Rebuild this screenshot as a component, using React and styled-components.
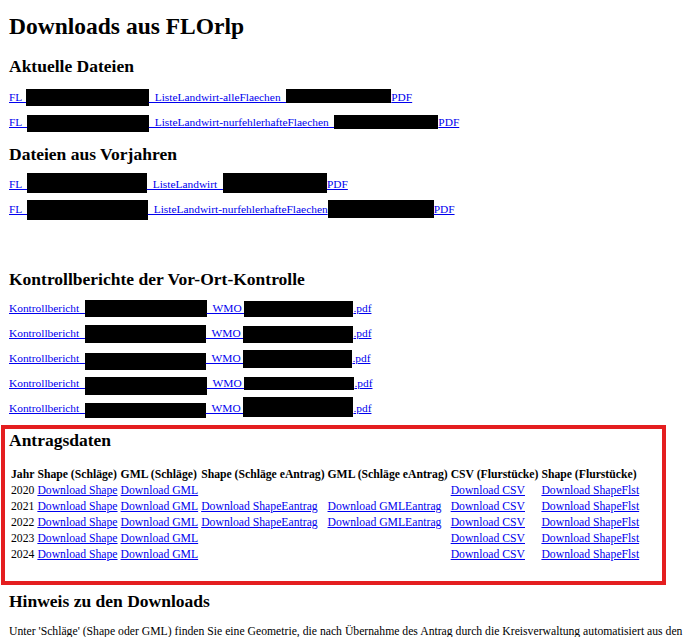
import React from 'react';
import styled, {createGlobalStyle} from "styled-components";

const GlobalStyle=createGlobalStyle`
  html{
    overflow:hidden;
  }
  body{
    margin:0;
    background:#fff;
  }
`;

const current=[
  {pre:"FL_",boxes:[{w:123,h:17,va:-5,ml:-2},{w:105,h:14,va:-2}],parts:["_ListeLandwirt-alleFlaechen_","PDF"]},
  {pre:"FL_",boxes:[{w:122,h:17,va:-6,ml:-1},{w:104,h:14,va:-3}],parts:["_ListeLandwirt-nurfehlerhafteFlaechen_","PDF"]},
];

const previous=[
  {pre:"FL_",boxes:[{w:120,h:20,va:-5,ml:-1},{w:104,h:20,va:-5}],parts:["_ListeLandwirt_","PDF"]},
  {pre:"FL_",boxes:[{w:121,h:20,va:-7,ml:-1},{w:106,h:18,va:-5}],parts:["_ListeLandwirt-nurfehlerhafteFlaechen","PDF"]},
];

const reports=[
  [{w:122,h:17,va:-5},{w:109,h:16,va:-5,ml:-3}],
  [{w:121,h:18,va:-6},{w:110,h:17,va:-6,ml:-3}],
  [{w:121,h:17,va:-8},{w:109,h:18,va:-6,ml:-3}],
  [{w:122,h:18,va:-8},{w:110,h:13,va:-3,ml:-3}],
  [{w:121,h:15,va:-6},{w:110,h:20,va:-5,ml:-3}],
].map(boxes=>({pre:"Kontrollbericht_",boxes,parts:["_WMO_",".pdf"]}));

const columns=["Jahr","Shape (Schläge)","GML (Schläge)","Shape (Schläge eAntrag)","GML (Schläge eAntrag)","CSV (Flurstücke)","Shape (Flurstücke)"];

const years=[
  {year:2020,eantrag:false},
  {year:2021,eantrag:true},
  {year:2022,eantrag:true},
  {year:2023,eantrag:false},
  {year:2024,eantrag:false},
];

export default function App() {

  const Box=({b})=><Redact $w={b.w} $h={b.h} $va={b.va} $ml={b.ml||0}/>

  const FileLink=({file})=>(
    <Row>
      <Anchor href="#">
        {file.pre}
        <Box b={file.boxes[0]}/>
        {file.parts[0]}
        <Box b={file.boxes[1]}/>
        {file.parts[1]}
      </Anchor>
    </Row>
  )

  return (
    <Page>
      <GlobalStyle/>
      <Title>Downloads aus FLOrlp</Title>

      <Heading $top={15}>Aktuelle Dateien</Heading>
      <LinkList>
        {current.map((f,i)=><FileLink key={i} file={f}/>)}
      </LinkList>

      <Heading $top={8}>Dateien aus Vorjahren</Heading>
      <LinkList $top={7}>
        {previous.map((f,i)=><FileLink key={i} file={f}/>)}
      </LinkList>

      <Heading $top={46}>Kontrollberichte der Vor-Ort-Kontrolle</Heading>
      <LinkList $top={6}>
        {reports.map((f,i)=><FileLink key={i} file={f}/>)}
      </LinkList>

      <Highlight>
        <Heading $top={0}>Antragsdaten</Heading>
        <DataTable>
          <thead>
            <tr>
              {columns.map(c=><Th key={c}>{c}</Th>)}
            </tr>
          </thead>
          <tbody>
            {years.map(y=>(
              <tr key={y.year}>
                <Td>{y.year}</Td>
                <Td><Anchor href="#">Download Shape</Anchor></Td>
                <Td><Anchor href="#">Download GML</Anchor></Td>
                <Td>{y.eantrag && <Anchor href="#">Download ShapeEantrag</Anchor>}</Td>
                <Td>{y.eantrag && <Anchor href="#">Download GMLEantrag</Anchor>}</Td>
                <Td><Anchor href="#">Download CSV</Anchor></Td>
                <Td><Anchor href="#">Download ShapeFlst</Anchor></Td>
              </tr>
            ))}
          </tbody>
        </DataTable>
      </Highlight>

      <Heading $top={5}>Hinweis zu den Downloads</Heading>
      <Note>
        Unter 'Schläge' (Shape oder GML) finden Sie eine Geometrie, die nach Übernahme des Antrag durch die Kreisverwaltung automatisiert aus den Antragsdaten erzeugt wurde. Unter 'Flurstücke' finden Sie die beantragten Flurstücke.
      </Note>
    </Page>
    )
  }

const Page=styled.div`
  padding:0 0 0 9px;
  font-family:"Liberation Serif","Times New Roman",serif;
  font-size:11.4px;
  color:#000;
`;

const Title=styled.h1`
  margin:12px 0 0 0;
  font-size:23.5px;
  line-height:28px;
  font-weight:bold;
`;

const Heading=styled.h2`
  margin:${p=>p.$top}px 0 0 0;
  font-size:17.5px;
  line-height:22px;
  font-weight:bold;
`;

const LinkList=styled.div`
  display:flex;
  flex-direction:column;
  margin-top:${p=>p.$top ?? 8}px;
`;

const Row=styled.div`
  height:25px;
  line-height:25px;
  white-space:nowrap;
`;

const Anchor=styled.a`
  color:#0000ee;
  text-decoration:underline;
`;

const Redact=styled.span`
  display:inline-block;
  width:${p=>p.$w}px;
  height:${p=>p.$h}px;
  margin-left:${p=>p.$ml}px;
  background:#000;
  vertical-align:${p=>p.$va}px;
`;

const Highlight=styled.section`
  box-sizing:border-box;
  width:665px;
  height:160px;
  margin:4px 0 0 -8px;
  padding:0 0 0 4px;
  border:4px solid #e41e20;
`;

const DataTable=styled.table`
  margin-top:16px;
  margin-left:-1px;
  border-collapse:separate;
  border-spacing:3px 0;
  font-size:11.7px;
`;

const Th=styled.th`
  padding:1px 0;
  line-height:14px;
  font-weight:bold;
  text-align:left;
  white-space:nowrap;
`;

const Td=styled.td`
  padding:1px 0;
  line-height:14px;
  white-space:nowrap;
`;

const Note=styled.p`
  margin:13px 0 0 0;
  font-size:11.7px;
  line-height:14px;
`;
